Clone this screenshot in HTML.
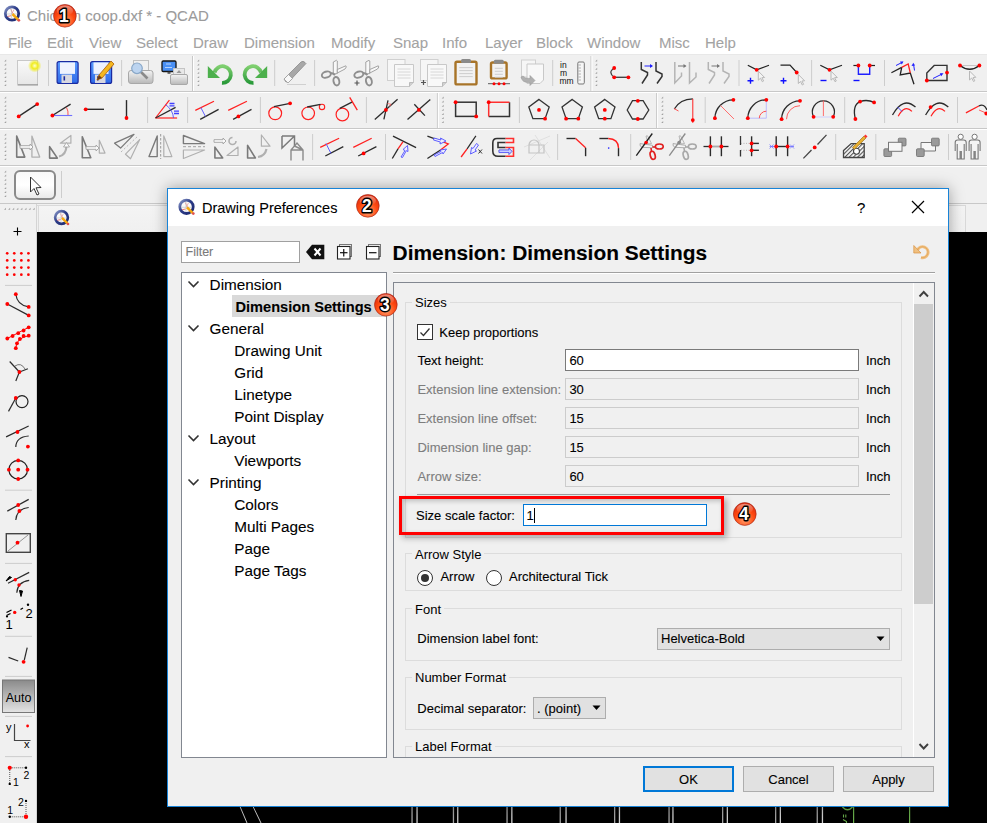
<!DOCTYPE html>
<html><head><meta charset="utf-8">
<style>
*{box-sizing:border-box;margin:0;padding:0}
html,body{width:987px;height:823px;overflow:hidden;background:#f0f0f0;font-family:"Liberation Sans",sans-serif;position:relative}
.a{position:absolute;line-height:1;white-space:nowrap;-webkit-text-stroke:0.1px currentColor}
.hl{position:absolute;height:1px;background:#c8c8c8}
.vl{position:absolute;width:1px;background:#c8c8c8}
.sep{position:absolute;width:1px;background:#cfcfcf}
.menu{font-size:15px;color:#a3a3a3;top:35px}
.ico{position:absolute;overflow:visible}
.tree{font-size:15.3px;color:#000}
.lbl{font-size:13px;color:#000}
.dis{color:#7d7d7d}
.fld{position:absolute;border:1px solid #cccccc;background:#f0f0f0}
.fld.en{border-color:#7a7a7a;background:#fff}
.grp{position:absolute;border:1px solid #dcdcdc}
.gt{position:absolute;background:#f0f0f0;padding:0 3px;font-size:13px;line-height:1}
.btn{position:absolute;border:1px solid #adadad;background:#e1e1e1;font-size:12.6px;text-align:center}
</style></head><body>
<!-- title + menu bar -->
<div class="a" style="left:0;top:0;width:987px;height:54px;background:#fff"></div>
<div class="hl" style="left:0;top:54px;width:987px;background:#e8e8e8"></div>
<div class="a" style="left:27px;top:7.5px;font-size:15px;color:#9b9b9b">Chicken coop.dxf * - QCAD</div>
<div class="a menu" style="left:8px">File</div>
<div class="a menu" style="left:47px">Edit</div>
<div class="a menu" style="left:89px">View</div>
<div class="a menu" style="left:136px">Select</div>
<div class="a menu" style="left:193px">Draw</div>
<div class="a menu" style="left:244px">Dimension</div>
<div class="a menu" style="left:331px">Modify</div>
<div class="a menu" style="left:393px">Snap</div>
<div class="a menu" style="left:442px">Info</div>
<div class="a menu" style="left:485px">Layer</div>
<div class="a menu" style="left:536px">Block</div>
<div class="a menu" style="left:587px">Window</div>
<div class="a menu" style="left:659px">Misc</div>
<div class="a menu" style="left:705px">Help</div>

<!-- toolbar row lines -->
<div class="hl" style="left:0;top:91px;width:987px"></div>
<div class="hl" style="left:0;top:92px;width:987px;background:#fff"></div>
<div class="hl" style="left:0;top:128px;width:987px"></div>
<div class="hl" style="left:0;top:129px;width:987px;background:#fff"></div>
<div class="hl" style="left:0;top:165px;width:987px"></div>
<div class="hl" style="left:0;top:166px;width:987px;background:#fff"></div>
<div class="hl" style="left:0;top:203px;width:987px"></div>

<!-- left toolbar -->
<div class="vl" style="left:36px;top:204px;height:619px;background:#d4d4d4"></div>

<!-- tab bar -->
<div class="a" style="left:37px;top:204px;width:950px;height:28px;background:#f0f0f0"></div>
<div class="hl" style="left:37px;top:205px;width:929px;background:#d9d9d9"></div>
<div class="a" style="left:38px;top:206px;width:928px;height:26px;background:linear-gradient(#f4f4f4,#f0f0f0);border-left:1px solid #d9d9d9;border-right:1px solid #d9d9d9"></div>

<!-- canvas -->
<div class="a" style="left:37px;top:232px;width:950px;height:591px;background:#000"></div>

<svg class="a" style="left:0;top:0" width="987" height="823" viewBox="0 0 987 823"><defs>
<radialGradient id="glow"><stop offset="0" stop-color="#ffffd0"/><stop offset="0.45" stop-color="#f0ec20"/><stop offset="1" stop-color="#f0ec20" stop-opacity="0"/></radialGradient>
<linearGradient id="paper" x1="0" y1="0" x2="0" y2="1"><stop offset="0" stop-color="#fafafa"/><stop offset="1" stop-color="#e6e6e6"/></linearGradient>
<linearGradient id="flop" x1="0" y1="0" x2="0" y2="1"><stop offset="0" stop-color="#5a9cff"/><stop offset="1" stop-color="#2f6ae8"/></linearGradient>
<linearGradient id="grn" x1="0" y1="0" x2="0" y2="1"><stop offset="0" stop-color="#7fcf6f"/><stop offset="1" stop-color="#2a9a3a"/></linearGradient>
<linearGradient id="prn" x1="0" y1="0" x2="0" y2="1"><stop offset="0" stop-color="#f4f4f4"/><stop offset="1" stop-color="#b8b8b8"/></linearGradient>
<linearGradient id="auto" x1="0" y1="0" x2="0" y2="1"><stop offset="0" stop-color="#8a8a8a"/><stop offset="1" stop-color="#e4e4e4"/></linearGradient>
<linearGradient id="selbtn" x1="0" y1="0" x2="0" y2="1"><stop offset="0" stop-color="#f8f8f8"/><stop offset="0.5" stop-color="#ffffff"/><stop offset="1" stop-color="#e8e8e8"/></linearGradient>
<pattern id="hatch" width="3" height="3" patternUnits="userSpaceOnUse" patternTransform="rotate(45)"><rect width="3" height="3" fill="#fff"/><rect width="1.2" height="3" fill="#555"/></pattern>
</defs><path d="M4.2 61.5 L6.2 59.5 L6.2 61.5 Z" fill="#a0a0a0"/>
<path d="M4.2 65.6 L6.2 63.6 L6.2 65.6 Z" fill="#a0a0a0"/>
<path d="M4.2 69.7 L6.2 67.7 L6.2 69.7 Z" fill="#a0a0a0"/>
<path d="M4.2 73.8 L6.2 71.8 L6.2 73.8 Z" fill="#a0a0a0"/>
<path d="M4.2 77.89999999999999 L6.2 75.89999999999999 L6.2 77.89999999999999 Z" fill="#a0a0a0"/>
<path d="M4.2 81.99999999999999 L6.2 79.99999999999999 L6.2 81.99999999999999 Z" fill="#a0a0a0"/>
<path d="M4.2 86.09999999999998 L6.2 84.09999999999998 L6.2 86.09999999999998 Z" fill="#a0a0a0"/>
<rect x="17.5" y="60.5" width="20" height="24.5" fill="url(#paper)" stroke="#c8c8c8" stroke-width="1"/>
<rect x="18" y="84" width="20" height="1.5" fill="#888" opacity="0.6"/>
<circle cx="34.7" cy="65.8" r="6.8" fill="url(#glow)"/>
<rect x="48.0" y="60" width="1" height="26" fill="#cdcdcd"/>
<rect x="57.1" y="61.6" width="21" height="21.8" rx="2" fill="url(#flop)" stroke="#1a2aa0" stroke-width="1.2"/>
<rect x="60.0" y="62.4" width="15" height="11.5" fill="#eef2fe"/>
<rect x="61.5" y="74.6" width="10.5" height="8.4" fill="#d8d8e0"/>
<rect x="63.5" y="76.3" width="1.6" height="4.2" fill="#1a2aa0"/>
<rect x="90.6" y="61.6" width="21" height="21.8" rx="2" fill="url(#flop)" stroke="#1a2aa0" stroke-width="1.2"/>
<rect x="93.5" y="62.4" width="15" height="11.5" fill="#eef2fe"/>
<rect x="95" y="74.6" width="10.5" height="8.4" fill="#d8d8e0"/>
<rect x="97" y="76.3" width="1.6" height="4.2" fill="#1a2aa0"/>
<path d="M97 80 L99 75 L111 61 L114 64 L102 78 Z" fill="#f4b820" stroke="#b46a10" stroke-width="0.9"/>
<path d="M97 80 L99 75 L102 78 Z" fill="#6a3a1a"/>
<rect x="121.1" y="60" width="1" height="26" fill="#cdcdcd"/>
<rect x="133.5" y="60.5" width="15" height="11" fill="#f0f0f0" stroke="#c0c0c0"/>
<path d="M128.5 73 Q128.5 70.5 131 70.5 L150.5 70.5 Q153 70.5 153 73 L153 81 Q153 83.5 150.5 83.5 L131 83.5 Q128.5 83.5 128.5 81Z" fill="url(#prn)" stroke="#a8a8a8"/>
<line x1="140" y1="71" x2="147.5" y2="78.5" stroke="#8a8a8a" stroke-width="2.6"/>
<circle cx="137" cy="68.3" r="5.3" fill="#bcd4f0" stroke="#8aa8c8" stroke-width="1.2"/>
<rect x="162" y="61" width="14" height="10.5" rx="1.2" fill="#4a90f5" stroke="#151515" stroke-width="1.3"/>
<path d="M165 67.5 L172 67.5 M166 64 L171 64" stroke="#cfe3ff" stroke-width="0.8"/>
<rect x="167.5" y="71.8" width="3" height="2" fill="#555"/>
<rect x="173.5" y="68.5" width="11" height="8" fill="#e8e8e8" stroke="#c4c4c4"/>
<path d="M170.5 76 Q170.5 74.5 172 74.5 L186 74.5 Q187.5 74.5 187.5 76 L187.5 83 Q187.5 84.5 186 84.5 L172 84.5 Q170.5 84.5 170.5 83Z" fill="url(#prn)" stroke="#a8a8a8"/>
<path d="M179 70 L176.5 73 L181.5 73Z" fill="#9a9a9a"/>
<rect x="192.0" y="56" width="1" height="35" fill="#c8c8c8"/>
<rect x="193.0" y="56" width="1" height="35" fill="#ffffff"/>
<path d="M197.2 61.5 L199.2 59.5 L199.2 61.5 Z" fill="#a0a0a0"/>
<path d="M197.2 65.6 L199.2 63.6 L199.2 65.6 Z" fill="#a0a0a0"/>
<path d="M197.2 69.7 L199.2 67.7 L199.2 69.7 Z" fill="#a0a0a0"/>
<path d="M197.2 73.8 L199.2 71.8 L199.2 73.8 Z" fill="#a0a0a0"/>
<path d="M197.2 77.89999999999999 L199.2 75.89999999999999 L199.2 77.89999999999999 Z" fill="#a0a0a0"/>
<path d="M197.2 81.99999999999999 L199.2 79.99999999999999 L199.2 81.99999999999999 Z" fill="#a0a0a0"/>
<path d="M197.2 86.09999999999998 L199.2 84.09999999999998 L199.2 86.09999999999998 Z" fill="#a0a0a0"/>
<path d="M214.5 72.5 A8.3 8.3 0 1 1 222 82.8" fill="none" stroke="url(#grn)" stroke-width="3.8"/>
<path d="M207.8 66 L207.8 78 L220 78 Z" fill="#4cb04c"/>
<path d="M261 72.5 A8.3 8.3 0 1 0 253.5 82.8" fill="none" stroke="url(#grn)" stroke-width="3.8"/>
<path d="M267.2 66 L267.2 78 L255 78 Z" fill="#4cb04c"/>
<rect x="274.2" y="60" width="1" height="26" fill="#cdcdcd"/>
<path d="M284 79 L301 62 Q303 60.5 305 62.5 L306 63.5 L289 81.5 L286 82 Z" fill="#a8a8a8" stroke="#8a8a8a" stroke-width="0.8"/>
<path d="M284 79 L288.5 74.5 L292.5 78.5 L288 83 Z" fill="#f8f8f8" stroke="#9a9a9a" stroke-width="0.8"/>
<line x1="287" y1="84.5" x2="306" y2="84.5" stroke="#d0d0d0" stroke-width="1"/>
<rect x="314.1" y="60" width="1" height="26" fill="#cdcdcd"/>
<path d="M333.3 62 L336.5 60.3 L337.3 61 L337.3 73.5 L333.3 74 Z" fill="#f8f8f8" stroke="#9a9a9a" stroke-width="0.9"/>
<path d="M337.3 69.5 L345.8 65.8 L346.3 67 L345.0 69 L337.3 73 Z" fill="#f8f8f8" stroke="#9a9a9a" stroke-width="0.9"/>
<ellipse cx="326.3" cy="74.6" rx="4.6" ry="3" fill="none" stroke="#8e8e8e" stroke-width="1.9" transform="rotate(-18 326.3 74.6)"/>
<path d="M330.5 73 Q333.0 73 335.0 75" fill="none" stroke="#8e8e8e" stroke-width="1.9"/>
<ellipse cx="336.4" cy="81.2" rx="2.9" ry="4.3" fill="none" stroke="#8e8e8e" stroke-width="1.9" transform="rotate(-12 336.4 81.2)"/>
<path d="M365.8 62 L369.0 60.3 L369.8 61 L369.8 73.5 L365.8 74 Z" fill="#f8f8f8" stroke="#9a9a9a" stroke-width="0.9"/>
<path d="M369.8 69.5 L378.3 65.8 L378.8 67 L377.5 69 L369.8 73 Z" fill="#f8f8f8" stroke="#9a9a9a" stroke-width="0.9"/>
<ellipse cx="358.8" cy="74.6" rx="4.6" ry="3" fill="none" stroke="#8e8e8e" stroke-width="1.9" transform="rotate(-18 358.8 74.6)"/>
<path d="M363.0 73 Q365.5 73 367.5 75" fill="none" stroke="#8e8e8e" stroke-width="1.9"/>
<ellipse cx="368.9" cy="81.2" rx="2.9" ry="4.3" fill="none" stroke="#8e8e8e" stroke-width="1.9" transform="rotate(-12 368.9 81.2)"/>
<path d="M354.5 83 H359.5 M357 80.5 V85.5" stroke="#555" stroke-width="1.2"/>
<rect x="387.5" y="59.5" width="17.5" height="21" fill="#f6f6f6" stroke="#d0d0d0"/>
<path d="M394.5 64.5 H413.5 V82" fill="none"/>
<path d="M394.5 64.5 H413.5 V82.5 L409.5 86.5 H394.5 Z" fill="#f8f8f8" stroke="#c8c8c8"/>
<path d="M409.5 86.5 L409.5 82.5 H413.5" fill="#d0d0d0" stroke="#b0b0b0" stroke-width="0.8"/>
<line x1="397.5" y1="69" x2="410.5" y2="69" stroke="#d4d4d4" stroke-width="0.9"/>
<line x1="397.5" y1="72" x2="410.5" y2="72" stroke="#d4d4d4" stroke-width="0.9"/>
<line x1="397.5" y1="75" x2="410.5" y2="75" stroke="#d4d4d4" stroke-width="0.9"/>
<line x1="397.5" y1="78" x2="410.5" y2="78" stroke="#d4d4d4" stroke-width="0.9"/>
<rect x="420.5" y="59.5" width="17.5" height="21" fill="#f6f6f6" stroke="#d0d0d0"/>
<path d="M427.5 64.5 H446.5 V82" fill="none"/>
<path d="M427.5 64.5 H446.5 V82.5 L442.5 86.5 H427.5 Z" fill="#f8f8f8" stroke="#c8c8c8"/>
<path d="M442.5 86.5 L442.5 82.5 H446.5" fill="#d0d0d0" stroke="#b0b0b0" stroke-width="0.8"/>
<line x1="430.5" y1="69" x2="443.5" y2="69" stroke="#d4d4d4" stroke-width="0.9"/>
<line x1="430.5" y1="72" x2="443.5" y2="72" stroke="#d4d4d4" stroke-width="0.9"/>
<line x1="430.5" y1="75" x2="443.5" y2="75" stroke="#d4d4d4" stroke-width="0.9"/>
<line x1="430.5" y1="78" x2="443.5" y2="78" stroke="#d4d4d4" stroke-width="0.9"/>
<path d="M421 82.5 H426 M423.5 80 V85" stroke="#555" stroke-width="1.2"/>
<rect x="455.5" y="61.800000000000004" width="21.0" height="22.6" rx="1.5" fill="#f2f2f2" stroke="#a87428" stroke-width="2.4"/>
<rect x="461.0" y="59.1" width="10" height="4" rx="1.5" fill="#8a8a8a"/>
<line x1="459.3" y1="67.6" x2="472.7" y2="67.6" stroke="#c8c8c8" stroke-width="0.9"/>
<line x1="459.3" y1="70.6" x2="472.7" y2="70.6" stroke="#c8c8c8" stroke-width="0.9"/>
<line x1="459.3" y1="73.6" x2="472.7" y2="73.6" stroke="#c8c8c8" stroke-width="0.9"/>
<line x1="459.3" y1="76.6" x2="472.7" y2="76.6" stroke="#c8c8c8" stroke-width="0.9"/>
<rect x="491.0" y="62.5" width="15.6" height="15.9" rx="1.5" fill="#f2f2f2" stroke="#a87428" stroke-width="2.4"/>
<rect x="493.8" y="59.8" width="10" height="4" rx="1.5" fill="#8a8a8a"/>
<line x1="494.8" y1="68.3" x2="502.8" y2="68.3" stroke="#c8c8c8" stroke-width="0.9"/>
<line x1="494.8" y1="71.3" x2="502.8" y2="71.3" stroke="#c8c8c8" stroke-width="0.9"/>
<line x1="494.8" y1="74.3" x2="502.8" y2="74.3" stroke="#c8c8c8" stroke-width="0.9"/>
<line x1="494.8" y1="77.3" x2="502.8" y2="77.3" stroke="#c8c8c8" stroke-width="0.9"/>
<line x1="488" y1="83.7" x2="510" y2="83.7" stroke="#333" stroke-width="0.8"/>
<circle cx="494" cy="83.7" r="1.5" fill="#ff0000"/>
<circle cx="499" cy="83.7" r="1.5" fill="#ff0000"/>
<circle cx="504" cy="83.7" r="1.5" fill="#ff0000"/>
<rect x="521.5" y="60" width="14" height="17" fill="#f6f6f6" stroke="#d0d0d0"/>
<path d="M527 64 H543.5 V80 L540 83.5 H527 Z" fill="#f8f8f8" stroke="#c8c8c8"/>
<path d="M521 77 Q522 83 530 82.5 L530 85.5 L535 80.5 L530 75.5 L530 78.5 Q525 79 523 76 Z" fill="#b0b0b0" stroke="#999" stroke-width="0.6"/>
<rect x="552.2" y="60" width="1" height="26" fill="#cdcdcd"/>
<text x="560" y="68" font-family="Liberation Sans" font-size="8.5" fill="#111">in</text>
<text x="560" y="76" font-family="Liberation Sans" font-size="8.5" fill="#111">m</text>
<text x="559.5" y="84.3" font-family="Liberation Sans" font-size="8.5" fill="#111">mm</text>
<rect x="577.8" y="62" width="6.5" height="22" rx="1.2" fill="#f6f6f6" stroke="#777" stroke-width="1"/>
<line x1="578.5" y1="65" x2="581" y2="65" stroke="#999" stroke-width="0.7"/>
<line x1="578.5" y1="68" x2="581" y2="68" stroke="#999" stroke-width="0.7"/>
<line x1="578.5" y1="71" x2="581" y2="71" stroke="#999" stroke-width="0.7"/>
<line x1="578.5" y1="74" x2="581" y2="74" stroke="#999" stroke-width="0.7"/>
<line x1="578.5" y1="77" x2="581" y2="77" stroke="#999" stroke-width="0.7"/>
<line x1="578.5" y1="80" x2="581" y2="80" stroke="#999" stroke-width="0.7"/>
<rect x="590.5" y="56" width="1" height="35" fill="#c8c8c8"/>
<rect x="591.5" y="56" width="1" height="35" fill="#ffffff"/>
<path d="M595.2 61.5 L597.2 59.5 L597.2 61.5 Z" fill="#a0a0a0"/>
<path d="M595.2 65.6 L597.2 63.6 L597.2 65.6 Z" fill="#a0a0a0"/>
<path d="M595.2 69.7 L597.2 67.7 L597.2 69.7 Z" fill="#a0a0a0"/>
<path d="M595.2 73.8 L597.2 71.8 L597.2 73.8 Z" fill="#a0a0a0"/>
<path d="M595.2 77.89999999999999 L597.2 75.89999999999999 L597.2 77.89999999999999 Z" fill="#a0a0a0"/>
<path d="M595.2 81.99999999999999 L597.2 79.99999999999999 L597.2 81.99999999999999 Z" fill="#a0a0a0"/>
<path d="M595.2 86.09999999999998 L597.2 84.09999999999998 L597.2 86.09999999999998 Z" fill="#a0a0a0"/>
<path d="M614.2 68 Q607.5 72.5 614.2 77.3" fill="none" stroke="#444" stroke-width="1.3" />
<path d="M614.2 77.3 L628.4 77.3" fill="none" stroke="#444" stroke-width="1.4" />
<circle cx="614.2" cy="68" r="1.9" fill="#ff0000"/>
<circle cx="614.2" cy="77.3" r="1.9" fill="#ff0000"/>
<circle cx="628.4" cy="77.3" r="1.9" fill="#ff0000"/>
<path d="M641.3 62 L641.3 69.5 L647.5 72.5 L647.5 75 L642.0 83.5" fill="none" stroke="#333" stroke-width="1.5" />
<path d="M656.0 62 L656.0 71 L662.0 74 L662.0 76.5 L657.0 83.5" fill="none" stroke="#333" stroke-width="1.5" />
<path d="M644.5 66 H652.0" stroke="#2020ff" stroke-width="1"/>
<path d="M653.0 66 L650.0 64 L650.0 68 Z" fill="#2020ff"/>
<path d="M674.8 62 L674.8 83 L681.5 76 L681.5 72.5" fill="none" stroke="#b4b4b4" stroke-width="1.5" />
<path d="M689.5 62 L689.5 83 L696 77 L696 72.5" fill="none" stroke="#b4b4b4" stroke-width="1.5" />
<path d="M678 66 H685.5" stroke="#777" stroke-width="1"/>
<path d="M686.5 66 L683.5 64 L683.5 68 Z" fill="#777"/>
<path d="M708.3 62 L708.3 69.5 L714.5 72.5 L714.5 75 L709.0 83.5" fill="none" stroke="#b4b4b4" stroke-width="1.5" />
<path d="M723.0 62 L723.0 71 L729.0 74 L729.0 76.5 L724.0 83.5" fill="none" stroke="#b4b4b4" stroke-width="1.5" />
<path d="M711.5 66 H719.0" stroke="#777" stroke-width="1"/>
<path d="M720.0 66 L717.0 64 L717.0 68 Z" fill="#777"/>
<rect x="738.5" y="60" width="1" height="26" fill="#cdcdcd"/>
<path d="M747.8 65.2 L756.7 69.8 L769 65.2" fill="none" stroke="#222" stroke-width="1.2" />
<circle cx="756.7" cy="69.8" r="1.9" fill="#ff0000"/>
<path d="M758.30 71.20 L758.30 80.20 L760.50 78.20 L762.30 81.70 L763.60 81.00 L761.90 77.70 L764.60 77.50Z" fill="#f4f4f4" stroke="#b8b8b8" stroke-width="1"/>
<path d="M747.5 80.7 H753.5 M750.5 77.7 V83.7" stroke="#1010ff" stroke-width="1.4"/>
<path d="M780.5 65.2 L790 65.2 L796.7 72.5" fill="none" stroke="#222" stroke-width="1.2" />
<circle cx="796.7" cy="72.5" r="1.9" fill="#ff0000"/>
<path d="M798.30 74.50 L798.30 83.50 L800.50 81.50 L802.30 85.00 L803.60 84.30 L801.90 81.00 L804.60 80.80Z" fill="#f4f4f4" stroke="#b8b8b8" stroke-width="1"/>
<path d="M780.5 80.7 H786.5 M783.5 77.7 V83.7" stroke="#1010ff" stroke-width="1.4"/>
<rect x="811.1" y="60" width="1" height="26" fill="#cdcdcd"/>
<path d="M820.3 65.2 L829.5 69.8 L842 65.2" fill="none" stroke="#222" stroke-width="1.2" />
<circle cx="829.5" cy="69.8" r="1.9" fill="#ff0000"/>
<path d="M831.00 71.20 L831.00 80.20 L833.20 78.20 L835.00 81.70 L836.30 81.00 L834.60 77.70 L837.30 77.50Z" fill="#f4f4f4" stroke="#b8b8b8" stroke-width="1"/>
<path d="M820.5 80.5 H826.5" stroke="#1010ff" stroke-width="1.4"/>
<path d="M853.4 65.5 L858.4 65.5" fill="none" stroke="#222" stroke-width="1.2" />
<path d="M869.7 65.5 L875 65.5" fill="none" stroke="#222" stroke-width="1.2" />
<path d="M858.4 65.5 L858.4 74.3 L869.7 74.3 L869.7 65.5" fill="none" stroke="#2020ff" stroke-width="1.4" />
<circle cx="858.4" cy="65.5" r="1.9" fill="#ff0000"/>
<circle cx="869.7" cy="65.5" r="1.9" fill="#ff0000"/>
<path d="M853.5 80.5 H859.5" stroke="#1010ff" stroke-width="1.4"/>
<rect x="884.0" y="60" width="1" height="26" fill="#cdcdcd"/>
<path d="M891.4 72.8 L901.7 67.4" fill="none" stroke="#222" stroke-width="1.2" />
<path d="M901.7 67.4 L900.2 75 L910.3 73 L914 84.3" fill="none" stroke="#222" stroke-width="1.3" />
<path d="M901.7 67.4 L908.2 64 L910.3 73" fill="none" stroke="#ff2020" stroke-width="1.3" />
<path d="M896 65.5 L902.5 62.2" stroke="#2020ff" stroke-width="1"/><path d="M903.5 61.6 L900 61.6 L901.8 64.4Z" fill="#2020ff"/>
<path d="M914.5 70.5 L913.5 64" stroke="#2020ff" stroke-width="1"/><path d="M913.3 62.8 L911.5 66 L915 65.6Z" fill="#2020ff"/>
<path d="M926.8 80.5 V73 L934.2 65.4 H947 V80.5 Z" fill="none" stroke="#333" stroke-width="1.4" />
<path d="M933 78.5 L942 74" stroke="#2020ff" stroke-width="1"/><path d="M943.5 73.2 L939.8 73.3 L941.2 76.3Z" fill="#2020ff"/>
<circle cx="926.8" cy="80.5" r="1.9" fill="#ff0000"/>
<circle cx="947" cy="72.6" r="1.9" fill="#ff0000"/>
<path d="M960 65.5 L979.4 65.5" fill="none" stroke="#bbb" stroke-width="0.8" />
<path d="M960 65.5 Q969.7 73 979.4 65.5" fill="none" stroke="#222" stroke-width="1.3" />
<circle cx="960" cy="65.5" r="1.9" fill="#ff0000"/>
<circle cx="979.4" cy="65.5" r="1.9" fill="#ff0000"/>
<path d="M969.50 71.00 L969.50 80.00 L971.70 78.00 L973.50 81.50 L974.80 80.80 L973.10 77.50 L975.80 77.30Z" fill="#f4f4f4" stroke="#b8b8b8" stroke-width="1"/>
<path d="M4.2 98.5 L6.2 96.5 L6.2 98.5 Z" fill="#a0a0a0"/>
<path d="M4.2 102.6 L6.2 100.6 L6.2 102.6 Z" fill="#a0a0a0"/>
<path d="M4.2 106.69999999999999 L6.2 104.69999999999999 L6.2 106.69999999999999 Z" fill="#a0a0a0"/>
<path d="M4.2 110.79999999999998 L6.2 108.79999999999998 L6.2 110.79999999999998 Z" fill="#a0a0a0"/>
<path d="M4.2 114.89999999999998 L6.2 112.89999999999998 L6.2 114.89999999999998 Z" fill="#a0a0a0"/>
<path d="M4.2 118.99999999999997 L6.2 116.99999999999997 L6.2 118.99999999999997 Z" fill="#a0a0a0"/>
<path d="M4.2 123.09999999999997 L6.2 121.09999999999997 L6.2 123.09999999999997 Z" fill="#a0a0a0"/>
<path d="M18.7 116.4 L37.2 104.1" fill="none" stroke="#2b2b2b" stroke-width="1.3" />
<circle cx="18.7" cy="116.4" r="1.9" fill="#ff0000"/>
<circle cx="37.2" cy="104.1" r="1.9" fill="#ff0000"/>
<path d="M52.4 115.5 L70.6 104.1" fill="none" stroke="#2b2b2b" stroke-width="1.3" />
<path d="M52.4 115.5 L72.2 115.5" fill="none" stroke="#7070ff" stroke-width="1.1" />
<path d="M66.5 107.5 Q68.5 111 68 115" fill="none" stroke="#ff4040" stroke-width="0.9" />
<circle cx="52.4" cy="115.5" r="1.9" fill="#ff0000"/>
<path d="M85.7 109.3 L104 109.3" fill="none" stroke="#2b2b2b" stroke-width="1.4" />
<circle cx="85.7" cy="109.3" r="1.9" fill="#ff0000"/>
<path d="M126.5 100.1 L126.5 118" fill="none" stroke="#2b2b2b" stroke-width="1.4" />
<circle cx="126.5" cy="118" r="1.9" fill="#ff0000"/>
<rect x="147.1" y="97" width="1" height="26" fill="#cdcdcd"/>
<path d="M155.5 118 L169.4 100.1" fill="none" stroke="#ff2020" stroke-width="1.2" />
<path d="M155.5 118 L177.1 118" fill="none" stroke="#ff2020" stroke-width="1.2" />
<path d="M155.5 118 L175.6 107.4" fill="none" stroke="#2b2b2b" stroke-width="1.3" />
<path d="M165.5 104.5 Q173 110 173.5 118" fill="none" stroke="#5050ff" stroke-width="0.9" />
<path d="M169.5 103.5 H174.5 M169.5 105.8 H174.5 M174 111.2 H179 M174 113.5 H179" stroke="#4040ff" stroke-width="1.3"/>
<rect x="187.1" y="97" width="1" height="26" fill="#cdcdcd"/>
<path d="M195.3 110.4 L214 101.2" fill="none" stroke="#ff2020" stroke-width="1.2" />
<path d="M200.2 119.4 L218.6 109.4" fill="none" stroke="#2b2b2b" stroke-width="1.3" />
<path d="M200.8 107.5 L205.4 116.4" fill="none" stroke="#6060ff" stroke-width="1" />
<path d="M228.2 110.4 L246.9 101.2" fill="none" stroke="#ff2020" stroke-width="1.2" />
<path d="M233.1 119.4 L251.5 109.4" fill="none" stroke="#2b2b2b" stroke-width="1.3" />
<circle cx="238.4" cy="116.4" r="1.9" fill="#ff0000"/>
<rect x="259.9" y="97" width="1" height="26" fill="#cdcdcd"/>
<circle cx="275.2" cy="113.3" r="6.4" fill="none" stroke="#ff2020" stroke-width="1.2"/>
<path d="M273.9 106.6 L290.1 103.3" fill="none" stroke="#2b2b2b" stroke-width="1.3" />
<circle cx="290.1" cy="103.3" r="1.9" fill="#ff0000"/>
<circle cx="308.2" cy="113.3" r="6.3" fill="none" stroke="#ff2020" stroke-width="1.2"/><circle cx="322" cy="106.9" r="2.7" fill="none" stroke="#ff2020" stroke-width="1.1"/>
<path d="M307.2 107 L320.5 104.3" fill="none" stroke="#2b2b2b" stroke-width="1.3" />
<circle cx="342.4" cy="114.5" r="6.3" fill="none" stroke="#ff2020" stroke-width="1.2"/>
<path d="M339.8 108.4 L352.4 101.9" fill="none" stroke="#2b2b2b" stroke-width="1.3" />
<path d="M349.7 97.3 L357.3 110.2" fill="none" stroke="#ff2020" stroke-width="1.3" />
<rect x="365.9" y="97" width="1" height="26" fill="#cdcdcd"/>
<path d="M374.8 119.4 L397.6 99.3" fill="none" stroke="#2b2b2b" stroke-width="1.3" />
<path d="M383.9 119.4 L388 100.4" fill="none" stroke="#2b2b2b" stroke-width="1.3" />
<path d="M387.5 103.5 L391 104.3 L389.5 106.5" fill="none" stroke="#ff6060" stroke-width="0.8" />
<circle cx="385.9" cy="109.9" r="1.9" fill="#ff0000"/>
<path d="M407.5 119.4 L430.3 99.6" fill="none" stroke="#2b2b2b" stroke-width="1.3" />
<path d="M414.3 104.2 L424.9 115.6" fill="none" stroke="#2b2b2b" stroke-width="1.3" />
<circle cx="418.9" cy="109.9" r="1.9" fill="#ff0000"/>
<rect x="436.9" y="93" width="1" height="35" fill="#c8c8c8"/>
<rect x="437.9" y="93" width="1" height="35" fill="#ffffff"/>
<path d="M441.7 98.5 L443.7 96.5 L443.7 98.5 Z" fill="#a0a0a0"/>
<path d="M441.7 102.6 L443.7 100.6 L443.7 102.6 Z" fill="#a0a0a0"/>
<path d="M441.7 106.69999999999999 L443.7 104.69999999999999 L443.7 106.69999999999999 Z" fill="#a0a0a0"/>
<path d="M441.7 110.79999999999998 L443.7 108.79999999999998 L443.7 110.79999999999998 Z" fill="#a0a0a0"/>
<path d="M441.7 114.89999999999998 L443.7 112.89999999999998 L443.7 114.89999999999998 Z" fill="#a0a0a0"/>
<path d="M441.7 118.99999999999997 L443.7 116.99999999999997 L443.7 118.99999999999997 Z" fill="#a0a0a0"/>
<path d="M441.7 123.09999999999997 L443.7 121.09999999999997 L443.7 123.09999999999997 Z" fill="#a0a0a0"/>
<rect x="455.6" y="102.2" width="20.6" height="14.2" fill="none" stroke="#333" stroke-width="1.5"/>
<circle cx="455.6" cy="102.2" r="1.9" fill="#ff0000"/>
<circle cx="476.2" cy="116.4" r="1.9" fill="#ff0000"/>
<path d="M488.7 116.4 L509.5 116.4 L509.5 102.2" fill="none" stroke="#333" stroke-width="1.5" />
<path d="M488.7 116.4 L488.7 102.2 L509.5 102.2" fill="none" stroke="#ff3030" stroke-width="1.5" />
<circle cx="488.7" cy="102.2" r="1.9" fill="#ff0000"/>
<rect x="518.9" y="97" width="1" height="26" fill="#cdcdcd"/>
<path d="M539 99.4 L549.2 106.9 L545.1 118.7 L532.9 118.7 L528.8 106.9Z" fill="none" stroke="#333" stroke-width="1.3"/>
<circle cx="539" cy="109.9" r="1.9" fill="#ff0000"/>
<circle cx="545.1" cy="118.7" r="1.9" fill="#ff0000"/>
<path d="M572.2 99.4 L582.4000000000001 106.9 L578.3000000000001 118.7 L566.1 118.7 L562.0 106.9Z" fill="none" stroke="#333" stroke-width="1.3"/>
<circle cx="566.1" cy="118.7" r="1.9" fill="#ff0000"/>
<circle cx="578.3" cy="118.7" r="1.9" fill="#ff0000"/>
<path d="M604.8 99.4 L615.0 106.9 L610.9 118.7 L598.6999999999999 118.7 L594.5999999999999 106.9Z" fill="none" stroke="#333" stroke-width="1.3"/>
<circle cx="604.8" cy="109.9" r="1.9" fill="#ff0000"/>
<circle cx="604.8" cy="118.7" r="1.9" fill="#ff0000"/>
<path d="M627.2 110 L632.5 100.6 L643.1 100.6 L648.8 110 L643.1 119 L632.5 119 Z" fill="none" stroke="#333" stroke-width="1.3"/>
<circle cx="637.8" cy="100.8" r="1.9" fill="#ff0000"/>
<circle cx="637.8" cy="119" r="1.9" fill="#ff0000"/>
<rect x="656.1" y="93" width="1" height="35" fill="#c8c8c8"/>
<rect x="657.1" y="93" width="1" height="35" fill="#ffffff"/>
<path d="M661.2 98.5 L663.2 96.5 L663.2 98.5 Z" fill="#a0a0a0"/>
<path d="M661.2 102.6 L663.2 100.6 L663.2 102.6 Z" fill="#a0a0a0"/>
<path d="M661.2 106.69999999999999 L663.2 104.69999999999999 L663.2 106.69999999999999 Z" fill="#a0a0a0"/>
<path d="M661.2 110.79999999999998 L663.2 108.79999999999998 L663.2 110.79999999999998 Z" fill="#a0a0a0"/>
<path d="M661.2 114.89999999999998 L663.2 112.89999999999998 L663.2 114.89999999999998 Z" fill="#a0a0a0"/>
<path d="M661.2 118.99999999999997 L663.2 116.99999999999997 L663.2 118.99999999999997 Z" fill="#a0a0a0"/>
<path d="M661.2 123.09999999999997 L663.2 121.09999999999997 L663.2 123.09999999999997 Z" fill="#a0a0a0"/>
<path d="M674.3 109 Q680 99 692.8 98.8" fill="none" stroke="#2b2b2b" stroke-width="1.3" />
<path d="M692.8 98.8 L692.8 122.9" fill="none" stroke="#ff2020" stroke-width="1" />
<path d="M674 108.5 L678.5 111" fill="none" stroke="#ff4040" stroke-width="0.9" />
<circle cx="692.8" cy="120.1" r="1.9" fill="#ff0000"/>
<rect x="704.7" y="97" width="1" height="26" fill="#cdcdcd"/>
<path d="M714.9 118.2 A18.5 18.5 0 0 1 733.4 99.8" fill="none" stroke="#2b2b2b" stroke-width="1.3" />
<path d="M720.5 105.5 L734 119" fill="none" stroke="#ff6060" stroke-width="0.9" />
<circle cx="714.9" cy="118.2" r="1.9" fill="#ff0000"/>
<circle cx="733.4" cy="99.8" r="1.9" fill="#ff0000"/>
<path d="M747.8 118.2 A18.5 18.5 0 0 1 766.3 99.8" fill="none" stroke="#2b2b2b" stroke-width="1.3" />
<path d="M747.8 118.2 L766.3 118.2 L766.3 99.8" fill="none" stroke="#b0b0ff" stroke-width="0.8" />
<path d="M759.3 118.2 A7 7 0 0 1 766.3 111.2" fill="none" stroke="#ff4040" stroke-width="0.9" />
<circle cx="747.8" cy="118.2" r="1.9" fill="#ff0000"/>
<circle cx="766.3" cy="99.8" r="1.9" fill="#ff0000"/>
<path d="M781.6 119.2 A18.4 18.4 0 0 1 800 100.8" fill="none" stroke="#2b2b2b" stroke-width="1.3" />
<path d="M786.5 119.2 A13.5 13.5 0 0 1 800 105.7" fill="none" stroke="#ff5050" stroke-width="0.9" />
<circle cx="781.6" cy="119.2" r="1.9" fill="#ff0000"/>
<circle cx="800" cy="100.8" r="1.9" fill="#ff0000"/>
<path d="M813.6 116.8 A11 11 0 1 1 833.2 116.8" fill="none" stroke="#2b2b2b" stroke-width="1.3" />
<path d="M823.4 100.5 L823.4 116" fill="none" stroke="#ff6060" stroke-width="0.9" />
<path d="M815 117 L832 117" fill="none" stroke="#c0c0ff" stroke-width="0.7" />
<circle cx="813.6" cy="116.8" r="1.9" fill="#ff0000"/>
<circle cx="833.2" cy="116.8" r="1.9" fill="#ff0000"/>
<rect x="844.2" y="97" width="1" height="26" fill="#cdcdcd"/>
<path d="M855.4 119 Q852 105 860.1 101.6 Q867 99 874.1 102.4" fill="none" stroke="#2b2b2b" stroke-width="1.3" />
<circle cx="855.4" cy="119" r="1.9" fill="#ff0000"/>
<circle cx="860.1" cy="101.6" r="1.9" fill="#ff0000"/>
<circle cx="874.1" cy="102.4" r="1.9" fill="#ff0000"/>
<rect x="884.1" y="97" width="1" height="26" fill="#cdcdcd"/>
<path d="M892.5 115 Q903 96 915.5 107.1" fill="none" stroke="#2b2b2b" stroke-width="1.3" />
<path d="M898.2 116.2 Q905 104 911.9 111.4" fill="none" stroke="#ff2020" stroke-width="1.2" />
<path d="M897.5 107 L902 111.5" fill="none" stroke="#4040ff" stroke-width="0.9" />
<path d="M925.6 115 Q936 96 948.3 107.1" fill="none" stroke="#2b2b2b" stroke-width="1.3" />
<path d="M931 116.2 Q938 104 945 111.4" fill="none" stroke="#ff2020" stroke-width="1.2" />
<circle cx="930.6" cy="107.1" r="1.9" fill="#ff0000"/>
<rect x="957.0" y="97" width="1" height="26" fill="#cdcdcd"/>
<path d="M965.9 112.9 L978.8 106" fill="none" stroke="#ff2020" stroke-width="1.2" />
<path d="M978.8 106 Q984 103 987 110" fill="none" stroke="#2b2b2b" stroke-width="1.3" />
<path d="M979 110 L986 113" fill="none" stroke="#ff5050" stroke-width="0.9" />
<circle cx="986.3" cy="113.5" r="1.9" fill="#ff0000"/>
<path d="M4.2 135.5 L6.2 133.5 L6.2 135.5 Z" fill="#a0a0a0"/>
<path d="M4.2 139.6 L6.2 137.6 L6.2 139.6 Z" fill="#a0a0a0"/>
<path d="M4.2 143.7 L6.2 141.7 L6.2 143.7 Z" fill="#a0a0a0"/>
<path d="M4.2 147.79999999999998 L6.2 145.79999999999998 L6.2 147.79999999999998 Z" fill="#a0a0a0"/>
<path d="M4.2 151.89999999999998 L6.2 149.89999999999998 L6.2 151.89999999999998 Z" fill="#a0a0a0"/>
<path d="M4.2 155.99999999999997 L6.2 153.99999999999997 L6.2 155.99999999999997 Z" fill="#a0a0a0"/>
<path d="M4.2 160.09999999999997 L6.2 158.09999999999997 L6.2 160.09999999999997 Z" fill="#a0a0a0"/>
<path d="M16.7 136.1 L16.7 157.1 L24.8 157.1Z" fill="none" stroke="#7a7a7a" stroke-width="1.6" stroke-linejoin="round"/>
<path d="M31.9 136.1 L31.9 157.1 L39.7 157.1Z" fill="none" stroke="#b0b0b0" stroke-width="1.3" stroke-linejoin="round"/>
<path d="M20 145.7 H30 V144 L33 147 L30 150 V148.3 H20Z" fill="#fafafa" stroke="#a0a0a0" stroke-width="0.9"/>
<path d="M49.6 146.7 L49.6 158.1 L57.4 158.1Z" fill="none" stroke="#7a7a7a" stroke-width="1.6" stroke-linejoin="round"/>
<path d="M60.3 143.2 L70.9 135.4 L70.9 143.2Z" fill="none" stroke="#b0b0b0" stroke-width="1.2" stroke-linejoin="round"/>
<path d="M59 156.5 Q66 155 66.5 146" fill="none" stroke="#b0b0b0" stroke-width="2.2" />
<path d="M63.5 147 L66.5 142.5 L69.5 147Z" fill="#fafafa" stroke="#a0a0a0" stroke-width="0.8"/>
<path d="M82.3 136.8 L82.3 157.8 L90.8 157.8Z" fill="none" stroke="#7a7a7a" stroke-width="1.6" stroke-linejoin="round"/>
<path d="M99.3 140.3 L99.3 153.1 L105 153.1Z" fill="none" stroke="#b0b0b0" stroke-width="1.2" stroke-linejoin="round"/>
<path d="M86 146.7 H96 V145 L99 148 L96 151 V149.3 H86Z" fill="#fafafa" stroke="#a0a0a0" stroke-width="0.9"/>
<path d="M114.6 143.2 L134 134.4 L120.6 148.1Z" fill="none" stroke="#7a7a7a" stroke-width="1.3" stroke-linejoin="round"/>
<path d="M125.5 154.2 L139.7 139.6 L130.5 158.8Z" fill="none" stroke="#b0b0b0" stroke-width="1.2" stroke-linejoin="round"/>
<path d="M121 152 L138 136" stroke="#b0b0b0" stroke-width="0.9" stroke-dasharray="2 2"/>
<path d="M157.2 135.9 L157.2 156.6 L149 156.6Z" fill="none" stroke="#7a7a7a" stroke-width="1.4" stroke-linejoin="round"/>
<path d="M163.8 135.9 L163.8 156.6 L171.9 156.6Z" fill="none" stroke="#b0b0b0" stroke-width="1.2" stroke-linejoin="round"/>
<path d="M160.7 134 V159" stroke="#999" stroke-width="1" stroke-dasharray="2.5 1.5"/>
<path d="M183.4 135.5 L183.4 143.6 L204.6 143.6Z" fill="none" stroke="#7a7a7a" stroke-width="1.4" stroke-linejoin="round"/>
<path d="M183.4 150 L204.6 150 L183.4 158.5Z" fill="none" stroke="#b0b0b0" stroke-width="1.2" stroke-linejoin="round"/>
<path d="M183 146.7 H205" stroke="#b0b0b0" stroke-width="1.3" stroke-dasharray="3 2"/>
<path d="M214 139.7 H223 V138 L226 141 L223 144 V142.3 H214Z" fill="#fafafa" stroke="#a0a0a0" stroke-width="0.9"/>
<path d="M232.5 137.5 A3.5 3.5 0 1 0 236 141" fill="none" stroke="#b0b0b0" stroke-width="1.6"/>
<path d="M214.9 147.1 L214.9 158 L222.7 158Z" fill="none" stroke="#7a7a7a" stroke-width="1.6" stroke-linejoin="round"/>
<path d="M227 155.5 L238 147 L238 155.5Z" fill="none" stroke="#b0b0b0" stroke-width="1.2" stroke-linejoin="round"/>
<path d="M247.6 145.4 L247.6 158 L255.4 158Z" fill="none" stroke="#7a7a7a" stroke-width="1.6" stroke-linejoin="round"/>
<path d="M261.4 135 L261.4 146.2 L270 146.2Z" fill="none" stroke="#b0b0b0" stroke-width="1.2" stroke-linejoin="round"/>
<path d="M258 157 Q265 156 266.5 149" fill="none" stroke="#b0b0b0" stroke-width="2.2" />
<path d="M282 136 H294.5 V146 M282 136 V148 L294.5 136" fill="none" stroke="#7a7a7a" stroke-width="1.5"/>
<path d="M291 160.5 V150 L297 143 L303 150 V160.5 M291 150 H303 M294.5 146 L303 150" fill="none" stroke="#8a8a8a" stroke-width="1.4"/>
<rect x="312.1" y="134" width="1" height="26" fill="#cdcdcd"/>
<path d="M320.2 147.4 L339.1 138.2" fill="none" stroke="#ff2020" stroke-width="1.2" />
<path d="M325.3 156 L343.3 146.7" fill="none" stroke="#2b2b2b" stroke-width="1.3" />
<path d="M326 143.5 L331 153.5" fill="none" stroke="#6060ff" stroke-width="1" />
<path d="M353.3 147.4 L371.7 138.2" fill="none" stroke="#ff2020" stroke-width="1.2" />
<path d="M358.2 156 L376.4 146.7" fill="none" stroke="#2b2b2b" stroke-width="1.3" />
<circle cx="363.6" cy="153.4" r="1.9" fill="#ff0000"/>
<rect x="385.0" y="134" width="1" height="26" fill="#cdcdcd"/>
<path d="M393 136.1 L416.1 147.7" fill="none" stroke="#2b2b2b" stroke-width="1.3" />
<path d="M402.9 141.8 L398 148.9" fill="none" stroke="#ff2020" stroke-width="1.3" />
<path d="M398 148.9 L392.3 158.5" fill="none" stroke="#2b2b2b" stroke-width="1.3" />
<path d="M401 157 L405 150.5 L403 149.5 L407.5 145.5 L408 151.5 L406.3 150.7 L402.5 157.5Z" fill="#eef" stroke="#5050ff" stroke-width="0.9"/>
<path d="M427.4 136.1 L438.4 140.1" fill="none" stroke="#2b2b2b" stroke-width="1.3" />
<path d="M438.4 140.1 L448.3 143.9 L440.5 150" fill="none" stroke="#ff2020" stroke-width="1.3" />
<path d="M440.5 150 L427.4 158.5" fill="none" stroke="#2b2b2b" stroke-width="1.3" />
<path d="M434 138 L441 140 L440.5 138 L446 141 L440 144 L440.3 142 L433.5 140Z" fill="#eef" stroke="#5050ff" stroke-width="0.9"/>
<path d="M434 155 L441 151.5 L440.3 150 L446.5 149 L443 154 L442.5 152.5 L435 156.5Z" fill="#eef" stroke="#5050ff" stroke-width="0.9"/>
<path d="M475.9 135.8 L467.1 148.8" fill="none" stroke="#2b2b2b" stroke-width="1.2" />
<path d="M467.1 148.8 L461.1 157" fill="none" stroke="#ff2020" stroke-width="1.3" />
<path d="M470.5 154 L471.5 147.5 L473 148.5 L476.5 143.5 L478.5 145 L475 150 L476.5 151Z" fill="#eef" stroke="#5050ff" stroke-width="0.9"/>
<path d="M478.5 149.5 L482 153.5 M482 149.5 L478.5 153.5" stroke="#333" stroke-width="1"/>
<path d="M505.6 138.5 H497 Q492.8 138.5 492.8 143 V151 Q492.8 156.3 498 156.3 H505.6 M505.6 142.5 H498 V147.5 H505.6" fill="none" stroke="#333" stroke-width="1.6"/>
<path d="M505.6 138.5 H513.5 V142.5 H505.6 M505.6 147.5 H513.5 V156.3 H505.6" fill="none" stroke="#ff3030" stroke-width="1.6"/>
<path d="M499 150.0 H509 V148.3 L512 151.3 L509 154.3 V152.60000000000002 H499Z" fill="#fafafa" stroke="#a0a0a0" stroke-width="0.9"/>
<path d="M499 150 H509 V148 L512 151.3 L509 154.5 V152.5 H499Z" fill="#c8d0ff" stroke="#5050ff" stroke-width="0.8"/>
<path d="M524 147 L550 136 M530 160 L548 142 M535 135 L550 158" stroke="#dadada" stroke-width="0.8"/>
<path d="M529 153 V145 A5 5 0 0 1 539 145 V153 Z M529 145 H544 V153 H529" fill="none" stroke="#c4c4c4" stroke-width="1.2"/>
<rect x="557.1" y="134" width="1" height="26" fill="#cdcdcd"/>
<path d="M566.5 138.5 L575.6 138.5" fill="none" stroke="#2b2b2b" stroke-width="1.4" />
<path d="M575.6 138.5 L585.6 147.8" fill="none" stroke="#ff2020" stroke-width="1.3" />
<path d="M585.6 147.8 L585.6 156.2" fill="none" stroke="#2b2b2b" stroke-width="1.4" />
<path d="M599.4 138.5 L608.2 138.5" fill="none" stroke="#2b2b2b" stroke-width="1.4" />
<path d="M608.2 138.5 Q618.5 139 618.5 148.1" fill="none" stroke="#ff2020" stroke-width="1.3" />
<path d="M618.5 148.1 L618.5 156.2" fill="none" stroke="#2b2b2b" stroke-width="1.4" />
<circle cx="608.7" cy="148.1" r="0.8" fill="#2020ff"/>
<rect x="630.2" y="134" width="1" height="26" fill="#cdcdcd"/>
<path d="M646 136 L647.5 135.8 L651.5 143.5 L648 144 Z" fill="#f0f0f0" stroke="#aaa" stroke-width="0.8"/>
<path d="M640 143.6 L652.5 145.3 L652.5 147.8 L642 147.3 Q639.5 146.5 640 143.6 Z" fill="#f4f4f4" stroke="#9a9a9a" stroke-width="0.8"/>
<ellipse cx="659.3" cy="146.5" rx="3.9" ry="2.5" fill="none" stroke="#e02020" stroke-width="1.7"/>
<path d="M652.5 147 L655.5 147" stroke="#e02020" stroke-width="1.6"/>
<ellipse cx="652.7" cy="155.3" rx="2.4" ry="4.1" fill="none" stroke="#e02020" stroke-width="1.7" transform="rotate(-15 652.7 155.3)"/>
<path d="M651 148 L651.5 151.5" stroke="#e02020" stroke-width="1.6"/>
<path d="M636.3 155.7 L652.3 133.5" stroke="#222" stroke-width="1.3"/>
<circle cx="646.1" cy="142.5" r="1.8" fill="#ff0000"/>
<path d="M679 136 L680.5 135.8 L684.5 143.5 L681 144 Z" fill="#f0f0f0" stroke="#aaa" stroke-width="0.8"/>
<path d="M673 143.6 L685.5 145.3 L685.5 147.8 L675 147.3 Q672.5 146.5 673 143.6 Z" fill="#f4f4f4" stroke="#9a9a9a" stroke-width="0.8"/>
<ellipse cx="692.3" cy="146.5" rx="3.9" ry="2.5" fill="none" stroke="#a8a8a8" stroke-width="1.7"/>
<path d="M685.5 147 L688.5 147" stroke="#a8a8a8" stroke-width="1.6"/>
<ellipse cx="685.7" cy="155.3" rx="2.4" ry="4.1" fill="none" stroke="#a8a8a8" stroke-width="1.7" transform="rotate(-15 685.7 155.3)"/>
<path d="M684 148 L684.5 151.5" stroke="#a8a8a8" stroke-width="1.6"/>
<path d="M669.3 155.7 L685.3 133.5" stroke="#8a8a8a" stroke-width="1.3"/>
<circle cx="679.1" cy="142.5" r="1.8" fill="#888"/>
<path d="M710.4 136.3 L710.4 156.2" fill="none" stroke="#2b2b2b" stroke-width="1.4" />
<path d="M721.4 136.3 L721.4 156.2" fill="none" stroke="#2b2b2b" stroke-width="1.4" />
<path d="M703.5 146.5 L728.5 146.5" fill="none" stroke="#2b2b2b" stroke-width="1.3" />
<path d="M711 146.5 L721 146.5" fill="none" stroke="#aaa" stroke-width="1" />
<circle cx="710.4" cy="146.5" r="1.9" fill="#ff0000"/>
<circle cx="721.4" cy="146.5" r="1.9" fill="#ff0000"/>
<path d="M740.5 136 V145 M740.5 150 V156.5" stroke="#333" stroke-width="1.3"/>
<path d="M751.6 136.3 L751.6 156.2" fill="none" stroke="#2b2b2b" stroke-width="1.4" />
<path d="M751.6 143.4 L758.9 143.4" fill="none" stroke="#2b2b2b" stroke-width="1.4" />
<path d="M751.6 150.3 L758.9 150.3" fill="none" stroke="#2b2b2b" stroke-width="1.4" />
<path d="M741 143.4 H751 M741 150.3 H751" stroke="#aaa" stroke-width="0.8" stroke-dasharray="1 1.5"/>
<circle cx="751.6" cy="143.4" r="1.9" fill="#ff0000"/>
<circle cx="751.6" cy="150.3" r="1.9" fill="#ff0000"/>
<path d="M776.2 136.3 L776.2 156.2" fill="none" stroke="#2b2b2b" stroke-width="1.4" />
<path d="M787.6 136.3 L787.6 156.2" fill="none" stroke="#2b2b2b" stroke-width="1.4" />
<path d="M776.2 146.5 L787.6 146.5" fill="none" stroke="#2b2b2b" stroke-width="1.4" />
<path d="M769.6 144.5 L773.6 148.5 M773.6 144.5 L769.6 148.5 M790 144.5 L794 148.5 M794 144.5 L790 148.5 M769.6 146.5 H776 M787.6 146.5 H794" stroke="#7070ff" stroke-width="0.8"/>
<circle cx="776.2" cy="146.5" r="1.9" fill="#ff0000"/>
<circle cx="787.6" cy="146.5" r="1.9" fill="#ff0000"/>
<path d="M803.4 158.4 L811.5 150" fill="none" stroke="#444" stroke-width="1.3" />
<path d="M817.5 144.5 L826.5 134.9" fill="none" stroke="#444" stroke-width="1.3" />
<circle cx="814.7" cy="147.4" r="1.9" fill="#ff0000"/>
<rect x="835.2" y="134" width="1" height="26" fill="#cdcdcd"/>
<path d="M843.5 157.5 V150.5 L851.2 143.6 H864.2 V157.5 Z" fill="url(#hatch)" stroke="#444" stroke-width="1.3"/>
<circle cx="856.5" cy="151.2" r="3" fill="#fff" stroke="#444" stroke-width="1.1"/>
<path d="M852.5 147.5 L864 136 L866 138 L854.5 149.3 Z" fill="#e8b030" stroke="#a07020" stroke-width="0.7"/><path d="M864 136 L865.5 134.5 L867.5 136.5 L866 138Z" fill="#ff3030"/>
<rect x="875.3" y="134" width="1" height="26" fill="#cdcdcd"/>
<rect x="898.3" y="138.2" width="7.7" height="7.7" rx="1" fill="#9a9a9a" stroke="#777" stroke-width="0.9"/>
<rect x="883.9" y="148.8" width="7.7" height="7.7" rx="1" fill="#9a9a9a" stroke="#777" stroke-width="0.9"/>
<rect x="888.5" y="142.3" width="13.5" height="9" fill="#f6f6f6" stroke="#777" stroke-width="1"/>
<path d="M921 151 V142.5 H935.5 V151 Z" fill="#f6f6f6" stroke="#777" stroke-width="1"/>
<rect x="931.5" y="138.2" width="7.7" height="7.7" rx="1" fill="#9a9a9a" stroke="#777" stroke-width="0.9"/>
<rect x="916.5" y="148.8" width="7.7" height="7.7" rx="1" fill="#9a9a9a" stroke="#777" stroke-width="0.9"/>
<rect x="948.0" y="134" width="1" height="26" fill="#cdcdcd"/>
<circle cx="960.7" cy="136.8" r="2.6" fill="#fff" stroke="#777" stroke-width="1"/>
<path d="M955.2 151 V142.5 Q955.2 140 957.7 140 H963.7 Q966.2 140 966.2 142.5 V151 M957.2 144 V159 H960.1 V151 M964.2 144 V159 H961.3000000000001 V151" fill="#f4f4f4" stroke="#777" stroke-width="1.1"/>
<circle cx="974.6" cy="136.8" r="2.6" fill="#fff" stroke="#777" stroke-width="1"/>
<path d="M969.1 151 V142.5 Q969.1 140 971.6 140 H977.6 Q980.1 140 980.1 142.5 V151 M971.1 144 V159 H974.0 V151 M978.1 144 V159 H975.2 V151" fill="#f4f4f4" stroke="#777" stroke-width="1.1"/>
<path d="M4.2 172.5 L6.2 170.5 L6.2 172.5 Z" fill="#a0a0a0"/>
<path d="M4.2 176.6 L6.2 174.6 L6.2 176.6 Z" fill="#a0a0a0"/>
<path d="M4.2 180.7 L6.2 178.7 L6.2 180.7 Z" fill="#a0a0a0"/>
<path d="M4.2 184.79999999999998 L6.2 182.79999999999998 L6.2 184.79999999999998 Z" fill="#a0a0a0"/>
<path d="M4.2 188.89999999999998 L6.2 186.89999999999998 L6.2 188.89999999999998 Z" fill="#a0a0a0"/>
<path d="M4.2 192.99999999999997 L6.2 190.99999999999997 L6.2 192.99999999999997 Z" fill="#a0a0a0"/>
<path d="M4.2 197.09999999999997 L6.2 195.09999999999997 L6.2 197.09999999999997 Z" fill="#a0a0a0"/>
<rect x="15" y="171" width="40" height="28" rx="5" fill="url(#selbtn)" stroke="#8a8a8a" stroke-width="2"/>
<path d="M30.5 177 V192 L34 188.5 L37 195 L39 194 L36 187.8 L41 187.5 Z" fill="#fff" stroke="#333" stroke-width="1"/>
<rect x="61.0" y="171" width="1" height="27" fill="#cdcdcd"/>
<path d="M4 209.7 L6 207.7 L6 209.7 Z" fill="#a0a0a0"/>
<path d="M8.1 209.7 L10.1 207.7 L10.1 209.7 Z" fill="#a0a0a0"/>
<path d="M12.2 209.7 L14.2 207.7 L14.2 209.7 Z" fill="#a0a0a0"/>
<path d="M16.299999999999997 209.7 L18.299999999999997 207.7 L18.299999999999997 209.7 Z" fill="#a0a0a0"/>
<path d="M20.4 209.7 L22.4 207.7 L22.4 209.7 Z" fill="#a0a0a0"/>
<path d="M24.5 209.7 L26.5 207.7 L26.5 209.7 Z" fill="#a0a0a0"/>
<path d="M28.6 209.7 L30.6 207.7 L30.6 209.7 Z" fill="#a0a0a0"/>
<path d="M32.7 209.7 L34.7 207.7 L34.7 209.7 Z" fill="#a0a0a0"/>
<path d="M13.5 231.5 H21.5 M17.5 227.5 V235.5" stroke="#000" stroke-width="1.1"/>
<circle cx="7.2" cy="253.3" r="1.35" fill="#ff0000"/>
<circle cx="7.2" cy="260.43" r="1.35" fill="#ff0000"/>
<circle cx="7.2" cy="267.56" r="1.35" fill="#ff0000"/>
<circle cx="7.2" cy="274.69" r="1.35" fill="#ff0000"/>
<circle cx="14.27" cy="253.3" r="1.35" fill="#ff0000"/>
<circle cx="14.27" cy="260.43" r="1.35" fill="#ff0000"/>
<circle cx="14.27" cy="267.56" r="1.35" fill="#ff0000"/>
<circle cx="14.27" cy="274.69" r="1.35" fill="#ff0000"/>
<circle cx="21.34" cy="253.3" r="1.35" fill="#ff0000"/>
<circle cx="21.34" cy="260.43" r="1.35" fill="#ff0000"/>
<circle cx="21.34" cy="267.56" r="1.35" fill="#ff0000"/>
<circle cx="21.34" cy="274.69" r="1.35" fill="#ff0000"/>
<circle cx="28.41" cy="253.3" r="1.35" fill="#ff0000"/>
<circle cx="28.41" cy="260.43" r="1.35" fill="#ff0000"/>
<circle cx="28.41" cy="267.56" r="1.35" fill="#ff0000"/>
<circle cx="28.41" cy="274.69" r="1.35" fill="#ff0000"/>
<rect x="5" y="284.9" width="27" height="1" fill="#cdcdcd"/>
<path d="M7.3 304 L28.7 315.4" fill="none" stroke="#2b2b2b" stroke-width="1.2" />
<path d="M15.8 294.2 Q17 305 28.7 306.9" fill="none" stroke="#2b2b2b" stroke-width="1.2" />
<circle cx="15.8" cy="294.2" r="1.9" fill="#ff0000"/>
<circle cx="7.3" cy="304" r="1.9" fill="#ff0000"/>
<circle cx="28.7" cy="306.9" r="1.9" fill="#ff0000"/>
<circle cx="28.7" cy="315.4" r="1.9" fill="#ff0000"/>
<circle cx="7.3" cy="338.5" r="1.9" fill="#ff0000"/>
<circle cx="12.6" cy="336" r="1.9" fill="#ff0000"/>
<circle cx="18.2" cy="333.2" r="1.9" fill="#ff0000"/>
<circle cx="23.6" cy="330.5" r="1.9" fill="#ff0000"/>
<circle cx="28.7" cy="327.3" r="1.9" fill="#ff0000"/>
<path d="M7.3 338.5 L28.7 327.3" fill="none" stroke="#ff0000" stroke-width="1" />
<circle cx="15.8" cy="348.2" r="1.9" fill="#ff0000"/>
<circle cx="17" cy="343.3" r="1.9" fill="#ff0000"/>
<circle cx="19.9" cy="339" r="1.9" fill="#ff0000"/>
<circle cx="23.6" cy="336" r="1.9" fill="#ff0000"/>
<circle cx="28.7" cy="335.7" r="1.9" fill="#ff0000"/>
<path d="M15.8 348.2 Q16 338 28.7 335.7" fill="none" stroke="#ff0000" stroke-width="1" />
<path d="M9.7 361.5 L19.4 372" fill="none" stroke="#2b2b2b" stroke-width="1.2" />
<path d="M19.4 372 L27.9 368.8" fill="none" stroke="#2b2b2b" stroke-width="1.2" />
<path d="M19.4 372 L15.8 381" fill="none" stroke="#2b2b2b" stroke-width="1.2" />
<path d="M15 366 Q21 362 25 369" fill="none" stroke="#555" stroke-width="0.8" />
<circle cx="19.4" cy="372" r="1.9" fill="#ff0000"/>
<circle cx="22" cy="401.6" r="6" fill="none" stroke="#222" stroke-width="1.2"/>
<path d="M8.5 411.4 L15.8 398" fill="none" stroke="#2b2b2b" stroke-width="1.2" />
<circle cx="15.8" cy="398" r="1.9" fill="#ff0000"/>
<path d="M6.1 436.9 L28.7 426" fill="none" stroke="#2b2b2b" stroke-width="1.2" />
<path d="M15.8 447 Q16 437 28.7 436" fill="none" stroke="#2b2b2b" stroke-width="1.2" />
<circle cx="17.5" cy="432" r="1.9" fill="#ff0000"/>
<circle cx="27.9" cy="446.6" r="1.9" fill="#ff0000"/>
<circle cx="18.2" cy="469.7" r="9.3" fill="none" stroke="#222" stroke-width="1.2"/>
<circle cx="18.2" cy="469.7" r="1.9" fill="#ff0000"/>
<circle cx="18.2" cy="460.4" r="1.9" fill="#ff0000"/>
<circle cx="18.2" cy="479" r="1.9" fill="#ff0000"/>
<circle cx="8.9" cy="469.7" r="1.9" fill="#ff0000"/>
<circle cx="27.5" cy="469.7" r="1.9" fill="#ff0000"/>
<rect x="5" y="489.7" width="27" height="1" fill="#cdcdcd"/>
<path d="M7.3 511.1 L28.7 499.4" fill="none" stroke="#2b2b2b" stroke-width="1.2" />
<path d="M15.8 520 Q16.5 509 28.7 507.5" fill="none" stroke="#2b2b2b" stroke-width="1.2" />
<circle cx="18.2" cy="505" r="1.9" fill="#ff0000"/>
<circle cx="19.4" cy="511" r="1.9" fill="#ff0000"/>
<rect x="6.3" y="533.7" width="24" height="18.6" fill="#f0f0f0" stroke="#444" stroke-width="1.4"/>
<path d="M8 551 L28 535" fill="none" stroke="#555" stroke-width="0.6" />
<circle cx="17.5" cy="542.7" r="1.9" fill="#ff0000"/>
<rect x="5" y="562.9" width="27" height="1" fill="#cdcdcd"/>
<path d="M8 583.3 L29.2 572.4" fill="none" stroke="#2b2b2b" stroke-width="1.2" />
<path d="M16.8 592.8 Q17.5 582 29.2 580.4" fill="none" stroke="#2b2b2b" stroke-width="1.2" />
<circle cx="15.3" cy="579.7" r="1.7" fill="#ff0000"/>
<circle cx="19" cy="585" r="1.7" fill="#ff0000"/>
<path d="M6 581 L11.5 577.5 L9.5 576.5 Z M19.5 590.5 L21 596.5 L22.5 591Z" fill="#000" stroke="#000" stroke-width="1"/>
<path d="M6.5 612.5 L11.5 610 M6.5 615.5 L10.5 613.5 M20.5 609.5 L23 608" stroke="#000" stroke-width="1.3"/>
<circle cx="14.7" cy="612.4" r="1.7" fill="#ff0000"/>
<circle cx="28" cy="604.8" r="1.2" fill="#000"/>
<circle cx="7" cy="616.5" r="1.1" fill="#000"/>
<text x="25.5" y="617.5" font-family="Liberation Sans" font-size="13" fill="#000">2</text><text x="5.5" y="629" font-family="Liberation Sans" font-size="13" fill="#000">1</text>
<rect x="5" y="635.8" width="27" height="1" fill="#cdcdcd"/>
<path d="M8.5 657.4 L18.2 661" fill="none" stroke="#2b2b2b" stroke-width="1.2" />
<path d="M24.3 660 L27.2 647.7" fill="none" stroke="#2b2b2b" stroke-width="1.2" />
<circle cx="23.6" cy="661.8" r="1.9" fill="#ff0000"/>
<rect x="5" y="675.9" width="27" height="1" fill="#cdcdcd"/>
<rect x="2.5" y="680" width="32" height="32.5" fill="url(#auto)" stroke="#777" stroke-width="1"/>
<text x="18.5" y="701.5" text-anchor="middle" font-family="Liberation Sans" font-size="12.5" fill="#000">Auto</text>
<rect x="5" y="715.9" width="27" height="1" fill="#cdcdcd"/>
<text x="6" y="731" font-family="Liberation Sans" font-size="11" fill="#000">y</text><text x="24" y="748" font-family="Liberation Sans" font-size="11" fill="#000">x</text>
<path d="M14.5 724 L14.5 740.5 L30.5 740.5" fill="none" stroke="#444" stroke-width="1.2" />
<circle cx="27.6" cy="726" r="1.4" fill="#ff0000"/>
<rect x="5" y="756.1" width="27" height="1" fill="#cdcdcd"/>
<path d="M9.75 768 V784 M9.75 767.8 H26" stroke="#444" stroke-width="0.9" stroke-dasharray="1 1"/>
<circle cx="9.75" cy="767.8" r="2.1" fill="#ff0000"/>
<circle cx="9.75" cy="783.9" r="1.2" fill="#000"/>
<circle cx="26" cy="767.8" r="1.2" fill="#000"/>
<text x="23.6" y="778.6" font-family="Liberation Sans" font-size="10.5" fill="#000">2</text><text x="13" y="786.4" font-family="Liberation Sans" font-size="10.5" fill="#000">1</text>
<path d="M9.75 816.8 H26 M26 801 V816.8" stroke="#444" stroke-width="0.9" stroke-dasharray="1 1"/>
<circle cx="26" cy="816.8" r="2.2" fill="#ff0000"/>
<circle cx="9.75" cy="816.8" r="1.2" fill="#000"/>
<circle cx="26" cy="800.9" r="1.2" fill="#000"/>
<text x="17.9" y="805.8" font-family="Liberation Sans" font-size="10.5" fill="#000">2</text><text x="7.3" y="813.7" font-family="Liberation Sans" font-size="10.5" fill="#000">1</text>
<path d="M239.8 806 L247 823 M252.8 806 L261 823" stroke="#c8c8c8" stroke-width="1"/>
<rect x="411.4" y="806" width="1.3" height="17" fill="#a4a4a4"/>
<rect x="416.4" y="806" width="1.3" height="17" fill="#d0d0d0"/>
<rect x="452.8" y="806" width="1.3" height="17" fill="#a4a4a4"/>
<rect x="457.1" y="806" width="1.3" height="17" fill="#d0d0d0"/>
<rect x="506.4" y="806" width="1.3" height="17" fill="#a4a4a4"/>
<rect x="511.2" y="806" width="1.3" height="17" fill="#d0d0d0"/>
<rect x="559.6" y="806" width="1.3" height="17" fill="#a4a4a4"/>
<rect x="565.4" y="806" width="1.3" height="17" fill="#d0d0d0"/>
<rect x="614.0" y="806" width="1.3" height="17" fill="#a4a4a4"/>
<rect x="618.8" y="806" width="1.3" height="17" fill="#d0d0d0"/>
<rect x="668.4" y="806" width="1.3" height="17" fill="#a4a4a4"/>
<rect x="672.3" y="806" width="1.3" height="17" fill="#d0d0d0"/>
<rect x="722.0" y="806" width="1.3" height="17" fill="#a4a4a4"/>
<rect x="726.7" y="806" width="1.3" height="17" fill="#d0d0d0"/>
<rect x="775.0" y="806" width="1.3" height="17" fill="#a4a4a4"/>
<rect x="779.7" y="806" width="1.3" height="17" fill="#d0d0d0"/>
<rect x="816.6" y="806" width="1.3" height="17" fill="#a4a4a4"/>
<rect x="821.8" y="806" width="1.3" height="17" fill="#d0d0d0"/>
<path d="M842.5 807 Q847.5 812.5 852.5 807" stroke="#6ab04c" stroke-width="1.4" fill="none"/>
<rect x="853" y="806" width="1.2" height="17" fill="#6ab04c"/>
<path d="M843.5 814.5 V817.5 M845.8 814.5 V817.5 M843 819.5 L846.5 821.5 V823" stroke="#6ab04c" stroke-width="1.1" fill="none"/>
<rect x="909" y="806" width="1.2" height="17" fill="#6ab04c"/></svg>
<!-- dialog -->
<div class="a" style="left:167px;top:188px;width:782px;height:619px;background:#f0f0f0;border:1px solid #1883d7;box-shadow:0 0 14px rgba(0,0,0,0.35)"></div>
<div class="a" style="left:168px;top:189px;width:780px;height:37px;background:#fff"></div>

<div class="a" style="left:202px;top:200.5px;font-size:14.5px;color:#000">Drawing Preferences</div>
<div class="a" style="left:857px;top:200px;font-size:15px;color:#000">?</div>
<svg class="ico" style="left:911px;top:200px" width="14" height="14"><path d="M1 1L13 13M13 1L1 13" stroke="#000" stroke-width="1.2"/></svg>

<!-- filter -->
<div class="a" style="left:181px;top:241px;width:119px;height:22px;background:#fff;border:1px solid #a0a0a0"></div>
<div class="a" style="left:185.5px;top:246.3px;font-size:12.5px;color:#7a7a7a">Filter</div>

<!-- heading -->
<div class="a" style="left:392.6px;top:242.6px;font-size:20.9px;font-weight:bold;color:#000">Dimension: Dimension Settings</div>
<div class="hl" style="left:393px;top:272px;width:542px;background:#a0a0a0"></div>
<div class="hl" style="left:393px;top:273px;width:542px;background:#fff"></div>

<!-- tree -->
<div class="a" style="left:181px;top:272px;width:206px;height:486px;background:#fff;border:1px solid #828790"></div>
<div class="a" style="left:232px;top:295px;width:154px;height:22px;background:#d9d9d9"></div>
<svg class="ico" style="left:187px;top:280px" width="13" height="9"><path d="M1.5 1.5L6.5 6.5L11.5 1.5" fill="none" stroke="#333" stroke-width="1.6"/></svg>
<div class="a tree" style="left:209.6px;top:276.6px">Dimension</div>
<div class="a tree" style="left:235.5px;top:300.4px;font-weight:bold;font-size:14.6px">Dimension Settings</div>
<svg class="ico" style="left:187px;top:324px" width="13" height="9"><path d="M1.5 1.5L6.5 6.5L11.5 1.5" fill="none" stroke="#333" stroke-width="1.6"/></svg>
<div class="a tree" style="left:209.6px;top:320.6px">General</div>
<div class="a tree" style="left:234.3px;top:342.6px">Drawing Unit</div>
<div class="a tree" style="left:234.3px;top:364.6px">Grid</div>
<div class="a tree" style="left:234.3px;top:386.6px">Linetype</div>
<div class="a tree" style="left:234.3px;top:408.6px">Point Display</div>
<svg class="ico" style="left:187px;top:434px" width="13" height="9"><path d="M1.5 1.5L6.5 6.5L11.5 1.5" fill="none" stroke="#333" stroke-width="1.6"/></svg>
<div class="a tree" style="left:209.6px;top:430.6px">Layout</div>
<div class="a tree" style="left:234.3px;top:452.6px">Viewports</div>
<svg class="ico" style="left:187px;top:478px" width="13" height="9"><path d="M1.5 1.5L6.5 6.5L11.5 1.5" fill="none" stroke="#333" stroke-width="1.6"/></svg>
<div class="a tree" style="left:209.6px;top:474.6px">Printing</div>
<div class="a tree" style="left:234.3px;top:496.6px">Colors</div>
<div class="a tree" style="left:234.3px;top:518.6px">Multi Pages</div>
<div class="a tree" style="left:234.3px;top:540.6px">Page</div>
<div class="a tree" style="left:234.3px;top:562.6px">Page Tags</div>

<!-- scroll area -->
<div class="a" style="left:393px;top:282px;width:542px;height:476px;border:1px solid #828790;background:#f0f0f0;overflow:hidden"></div>
<div class="a" style="left:914px;top:304px;width:19px;height:300px;background:#cdcdcd"></div>
<div class="a" style="left:913px;top:283px;width:1px;height:474px;background:#fff"></div><svg class="ico" style="left:917px;top:289px" width="12" height="10"><path d="M2.5 7.5L6.7 3L11 7.5" fill="none" stroke="#404040" stroke-width="1.9"/></svg>
<svg class="ico" style="left:917px;top:742px" width="12" height="10"><path d="M2.5 2L6.7 6.5L11 2" fill="none" stroke="#404040" stroke-width="1.9"/></svg>

<!-- Sizes group -->
<div class="grp" style="left:405px;top:302px;width:497px;height:236px"></div>
<div class="gt" style="left:412px;top:296.4px">Sizes</div>
<div class="a" style="left:417px;top:324px;width:16px;height:16px;border:1px solid #333;background:#fff"></div>
<svg class="ico" style="left:417px;top:324px" width="16" height="16"><path d="M3.5 8.5L6.5 11.5L12.5 4.5" fill="none" stroke="#333" stroke-width="1.3"/></svg>
<div class="a lbl" style="left:439.3px;top:326px">Keep proportions</div>
<div class="a lbl" style="left:417.4px;top:353.6px">Text height:</div>
<div class="fld en" style="left:565px;top:349px;width:294px;height:22px"></div>
<div class="a lbl" style="left:569.4px;top:353.6px">60</div>
<div class="a lbl" style="left:866px;top:353.6px">Inch</div>
<div class="a lbl dis" style="left:417.4px;top:382.6px">Extension line extension:</div>
<div class="fld" style="left:565px;top:378px;width:294px;height:22px"></div>
<div class="a lbl" style="left:569.4px;top:382.6px">30</div>
<div class="a lbl" style="left:866px;top:382.6px">Inch</div>
<div class="a lbl dis" style="left:417.4px;top:411.6px">Extension line offset:</div>
<div class="fld" style="left:565px;top:407px;width:294px;height:22px"></div>
<div class="a lbl" style="left:569.4px;top:411.6px">15</div>
<div class="a lbl" style="left:866px;top:411.6px">Inch</div>
<div class="a lbl dis" style="left:417.4px;top:440.6px">Dimension line gap:</div>
<div class="fld" style="left:565px;top:436px;width:294px;height:22px"></div>
<div class="a lbl" style="left:569.4px;top:440.6px">15</div>
<div class="a lbl" style="left:866px;top:440.6px">Inch</div>
<div class="a lbl dis" style="left:417.4px;top:469.6px">Arrow size:</div>
<div class="fld" style="left:565px;top:465px;width:294px;height:22px"></div>
<div class="a lbl" style="left:569.4px;top:469.6px">60</div>
<div class="a lbl" style="left:866px;top:469.6px">Inch</div>

<div class="hl" style="left:417px;top:494px;width:473px;background:#a0a0a0"></div>
<!-- red highlight -->
<div class="a" style="left:399px;top:496px;width:325px;height:39px;border:3px solid #ff0000;box-shadow:3px 3px 6px rgba(0,0,0,0.3), inset 2px 2px 5px rgba(0,0,0,0.22)"></div>
<div class="a lbl" style="left:416px;top:509.1px">Size scale factor:</div>
<div class="a" style="left:523px;top:504px;width:184px;height:22px;background:#fff;border:1px solid #0078d7"></div>
<div class="a lbl" style="left:526.5px;top:509.1px">1</div>
<div class="a" style="left:534px;top:508px;width:1px;height:15px;background:#000"></div>

<!-- Arrow style -->
<div class="grp" style="left:405px;top:553px;width:497px;height:38px"></div>
<div class="gt" style="left:412px;top:547.5px">Arrow Style</div>
<div class="a" style="left:417px;top:569.5px;width:16px;height:16px;border:1px solid #333;border-radius:50%;background:#fff"></div>
<div class="a" style="left:421px;top:573.5px;width:8px;height:8px;border-radius:50%;background:#333"></div>
<div class="a lbl" style="left:440.4px;top:569.6px">Arrow</div>
<div class="a" style="left:486px;top:569.5px;width:16px;height:16px;border:1px solid #333;border-radius:50%;background:#fff"></div>
<div class="a lbl" style="left:509px;top:569.6px">Architectural Tick</div>

<!-- Font -->
<div class="grp" style="left:405px;top:608px;width:497px;height:53px"></div>
<div class="gt" style="left:412px;top:603.0px">Font</div>
<div class="a lbl" style="left:417.3px;top:632.0px">Dimension label font:</div>
<div class="btn" style="left:657px;top:628px;width:233px;height:22px"></div>
<div class="a lbl" style="left:661px;top:632.0px">Helvetica-Bold</div>
<svg class="ico" style="left:876px;top:636px" width="9" height="6"><path d="M0.5 0.5H8.5L4.5 5Z" fill="#000"/></svg>

<!-- Number format -->
<div class="grp" style="left:405px;top:677px;width:497px;height:53px"></div>
<div class="gt" style="left:412px;top:670.7px">Number Format</div>
<div class="a lbl" style="left:417.3px;top:702.2px">Decimal separator:</div>
<div class="btn" style="left:533px;top:697px;width:73px;height:22px"></div>
<div class="a lbl" style="left:537px;top:702.2px">. (point)</div>
<svg class="ico" style="left:592px;top:705px" width="9" height="6"><path d="M0.5 0.5H8.5L4.5 5Z" fill="#000"/></svg>

<!-- Label format (clipped) -->
<div class="hl" style="left:405px;top:746px;width:497px;background:#dcdcdc"></div>
<div class="vl" style="left:405px;top:746px;height:11px;background:#dcdcdc"></div>
<div class="vl" style="left:901px;top:746px;height:11px;background:#dcdcdc"></div>
<div class="gt" style="left:412px;top:739.7px">Label Format</div>

<!-- buttons -->
<div class="btn" style="left:643px;top:766px;width:91px;height:26px;border:2px solid #0078d7"></div>
<div class="a lbl" style="left:643px;top:773.3px;width:91px;text-align:center">OK</div>
<div class="btn" style="left:743px;top:766px;width:91px;height:26px"></div>
<div class="a lbl" style="left:743px;top:773.3px;width:91px;text-align:center">Cancel</div>
<div class="btn" style="left:843px;top:766px;width:91px;height:26px"></div>
<div class="a lbl" style="left:843px;top:773.3px;width:91px;text-align:center">Apply</div>

<svg class="a" style="left:0;top:0" width="987" height="823" viewBox="0 0 987 823"><defs>
<radialGradient id="bdg" cx="0.5" cy="0.75" r="0.75"><stop offset="0" stop-color="#ffa070"/><stop offset="0.55" stop-color="#ff4a10"/><stop offset="1" stop-color="#d82a10"/></radialGradient>
<linearGradient id="qring" x1="0" y1="0" x2="1" y2="1"><stop offset="0" stop-color="#8a98c8"/><stop offset="0.45" stop-color="#2c3c88"/><stop offset="1" stop-color="#1e2a70"/></linearGradient>
<linearGradient id="bdgh" x1="0" y1="0" x2="0" y2="1"><stop offset="0" stop-color="#ffffff" stop-opacity="0.45"/><stop offset="1" stop-color="#ffffff" stop-opacity="0"/></linearGradient>
</defs><g transform="translate(12 13.5) scale(1.0)"><circle cx="0" cy="0" r="6.7" fill="#fafafa" stroke="url(#qring)" stroke-width="2.8"/><path d="M-5 0.5 H5 M-0.5 -5 V5" stroke="#c4c4c4" stroke-width="0.7"/><path d="M-1.5 -4.5 L1.5 1 M2 -4 L0 0" stroke="#e07070" stroke-width="0.5"/><path d="M-4.5 3 L-1 2.2" stroke="#e04040" stroke-width="0.7"/><path d="M0.5 0.5 L6.3 6.3" stroke="#f5a810" stroke-width="2.6"/><circle cx="6.8" cy="6.8" r="1.4" fill="#e05050"/></g>
<circle cx="64.9" cy="15.8" r="11.35" fill="url(#bdg)" stroke="#a02010" stroke-width="0.6"/>
<ellipse cx="64.9" cy="10.6925" rx="8.171999999999999" ry="5.1075" fill="url(#bdgh)"/>
<text x="63.900000000000006" y="22.0" text-anchor="middle" font-family="Liberation Sans" font-weight="bold" font-size="17.5" fill="#fff" stroke="#000" stroke-width="2.8" stroke-linejoin="round" paint-order="stroke">1</text>
<g transform="translate(186.5 206.8) scale(1.0)"><circle cx="0" cy="0" r="6.7" fill="#fafafa" stroke="url(#qring)" stroke-width="2.8"/><path d="M-5 0.5 H5 M-0.5 -5 V5" stroke="#c4c4c4" stroke-width="0.7"/><path d="M-1.5 -4.5 L1.5 1 M2 -4 L0 0" stroke="#e07070" stroke-width="0.5"/><path d="M-4.5 3 L-1 2.2" stroke="#e04040" stroke-width="0.7"/><path d="M0.5 0.5 L6.3 6.3" stroke="#f5a810" stroke-width="2.6"/><circle cx="6.8" cy="6.8" r="1.4" fill="#e05050"/></g>
<circle cx="367.85" cy="205.85" r="11.35" fill="url(#bdg)" stroke="#a02010" stroke-width="0.6"/>
<ellipse cx="367.85" cy="200.7425" rx="8.171999999999999" ry="5.1075" fill="url(#bdgh)"/>
<text x="366.85" y="212.04999999999998" text-anchor="middle" font-family="Liberation Sans" font-weight="bold" font-size="17.5" fill="#fff" stroke="#000" stroke-width="2.8" stroke-linejoin="round" paint-order="stroke">2</text>
<circle cx="385.85" cy="304.75" r="11.35" fill="url(#bdg)" stroke="#a02010" stroke-width="0.6"/>
<ellipse cx="385.85" cy="299.6425" rx="8.171999999999999" ry="5.1075" fill="url(#bdgh)"/>
<text x="384.85" y="310.95" text-anchor="middle" font-family="Liberation Sans" font-weight="bold" font-size="17.5" fill="#fff" stroke="#000" stroke-width="2.8" stroke-linejoin="round" paint-order="stroke">3</text>
<circle cx="744.8" cy="514" r="11.4" fill="url(#bdg)" stroke="#a02010" stroke-width="0.6"/>
<ellipse cx="744.8" cy="508.87" rx="8.208" ry="5.13" fill="url(#bdgh)"/>
<text x="743.8" y="520.2" text-anchor="middle" font-family="Liberation Sans" font-weight="bold" font-size="17.5" fill="#fff" stroke="#000" stroke-width="2.8" stroke-linejoin="round" paint-order="stroke">4</text>
<g transform="translate(61.5 217.5) scale(0.95)"><circle cx="0" cy="0" r="6.7" fill="#fafafa" stroke="url(#qring)" stroke-width="2.8"/><path d="M-5 0.5 H5 M-0.5 -5 V5" stroke="#c4c4c4" stroke-width="0.7"/><path d="M-1.5 -4.5 L1.5 1 M2 -4 L0 0" stroke="#e07070" stroke-width="0.5"/><path d="M-4.5 3 L-1 2.2" stroke="#e04040" stroke-width="0.7"/><path d="M0.5 0.5 L6.3 6.3" stroke="#f5a810" stroke-width="2.6"/><circle cx="6.8" cy="6.8" r="1.4" fill="#e05050"/></g>
<path d="M306 252 L312 244.8 H324.3 V259.2 H312 Z" fill="#111"/>
<path d="M314.5 248.5 L320.5 255.5 M320.5 248.5 L314.5 255.5" stroke="#fff" stroke-width="2"/>
<rect x="339.5" y="244.5" width="12" height="12" fill="#f0f0f0" stroke="#777" stroke-width="1"/>
<rect x="337.5" y="246.5" width="12.5" height="12.5" fill="#fff" stroke="#222" stroke-width="1.1"/>
<path d="M340 252.7 H347.5" stroke="#111" stroke-width="1.2"/>
<path d="M343.75 249 V256.5" stroke="#111" stroke-width="1.2"/>
<rect x="368.5" y="244.5" width="12" height="12" fill="#f0f0f0" stroke="#777" stroke-width="1"/>
<rect x="366.5" y="246.5" width="12.5" height="12.5" fill="#fff" stroke="#222" stroke-width="1.1"/>
<path d="M369 252.7 H376.5" stroke="#111" stroke-width="1.2"/>
<path d="M917.5 250 A5.5 5.5 0 1 1 921 257.5" fill="none" stroke="#f0c080" stroke-width="3"/>
<path d="M917.5 250 A5.5 5.5 0 1 1 921 257.5" fill="none" stroke="#d89040" stroke-width="0.8" opacity="0.6"/>
<path d="M913.8 245.5 L913.8 253 L921 253 Z" fill="#f0c080" stroke="#d89040" stroke-width="0.7"/></svg>
</body></html>
